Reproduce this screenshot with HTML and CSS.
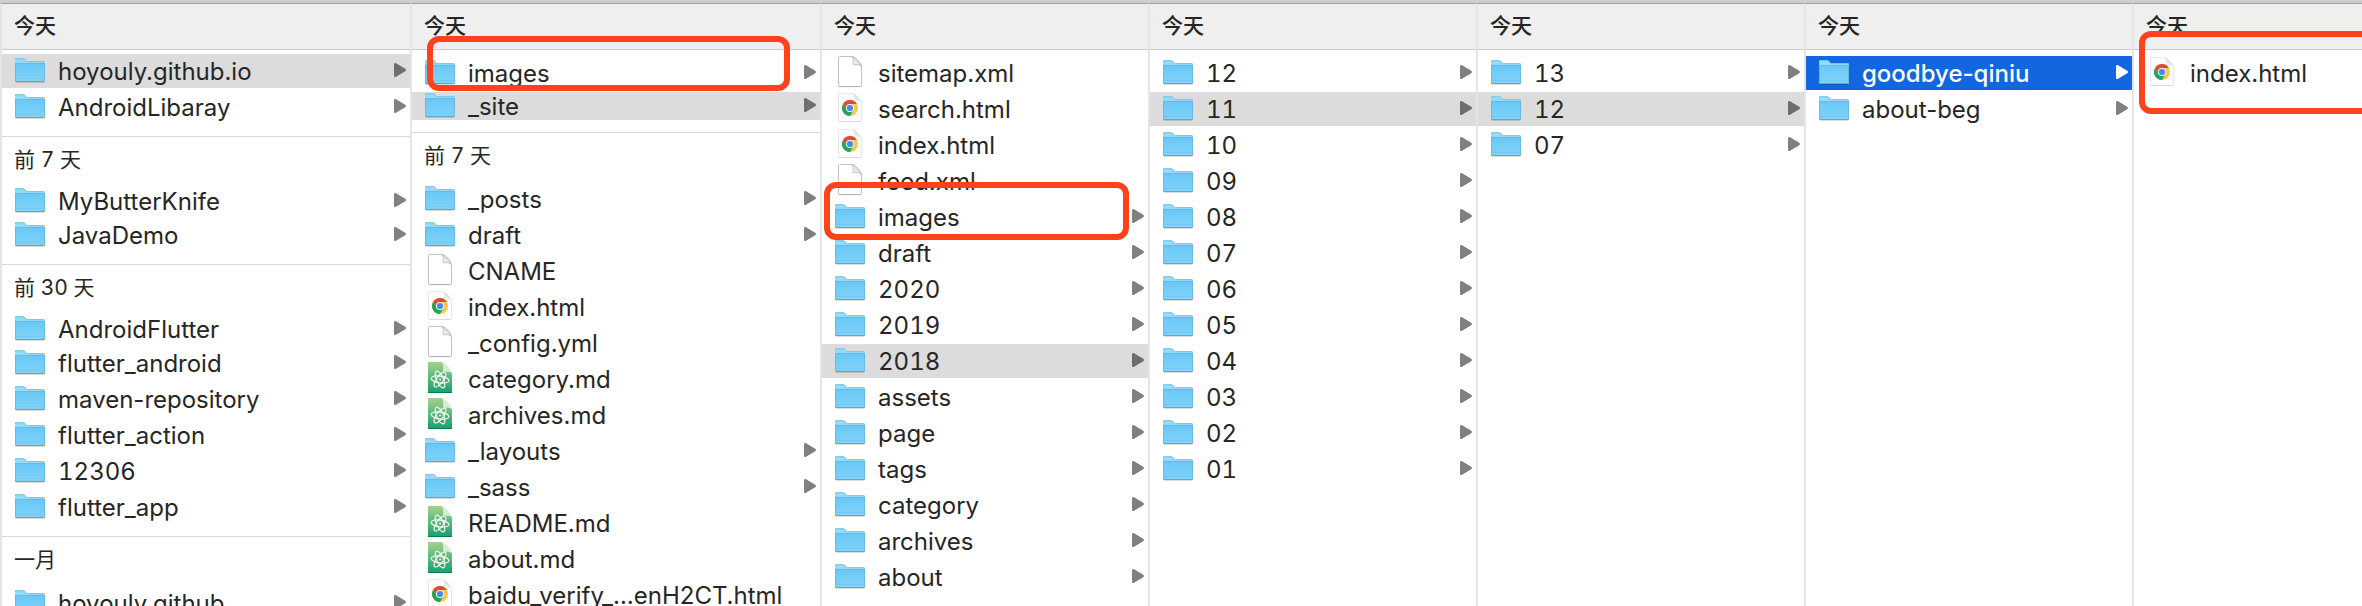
FILE: index.html
```html
<!DOCTYPE html>
<html lang="zh-CN">
<head>
<meta charset="utf-8">
<title>hoyouly.github.io</title>
<link rel="stylesheet" href="styles.css">
</head>
<body>
<svg class="defs" aria-hidden="true">
  <defs>
    <linearGradient id="g-folder" x1="0" y1="0" x2="0" y2="1"><stop offset="0" stop-color="#6ac8f5"/><stop offset="1" stop-color="#7fd3fa"/></linearGradient>
    <linearGradient id="g-atom" x1="0" y1="0" x2="0" y2="1"><stop offset="0" stop-color="#a3d28c"/><stop offset="1" stop-color="#16a06c"/></linearGradient>
    <linearGradient id="g-fold" x1="0" y1="1" x2="1" y2="0"><stop offset="0" stop-color="#ffffff"/><stop offset="1" stop-color="#c8c8c8"/></linearGradient>
    <symbol id="folder" viewBox="0 0 30 34">
      <path d="M1 28.5h28" stroke="#000" stroke-opacity=".14"/>
      <path d="M0 27V5.2Q0 4.2 1 4.2H8.4Q9.4 4.2 10 5L11.2 6.6Q11.7 7.2 12.6 7.2H29Q30 7.2 30 8.2V27Z" fill="#93dafb"/>
      <path d="M.5 6V5.2Q.5 4.7 1 4.7H8.4Q9.2 4.7 9.6 5.3L10.8 6.9Q11.3 7.6 12.4 7.6H29" fill="none" stroke="#78c4e8"/>
      <path d="M0 9.5H30V27Q30 28 29 28H1Q0 28 0 27Z" fill="url(#g-folder)"/>
      <path d="M0 9.5H30M.4 9.5V27M29.6 9.5V27" stroke="#5fb5dd" stroke-width=".8"/>
      <path d="M.5 27.5H29.5" stroke="#57abd2"/><path d="M1 24.5H29" stroke="#73c6ee" stroke-width=".7"/>
    </symbol>
    <symbol id="doc" viewBox="0 0 30 34">
      <path d="M3.5 1.5Q3.5.5 4.5.5H17Q19.500.8 21 2.500L25 7Q26.500 9 26.500 11V29.500Q26.500 30.500 25.500 30.500H4.500Q3.500 30.500 3.500 29.500Z" fill="#fff" stroke="#c2c2c2"/>
      <path d="M4 30.600H26" stroke="#a9a9a9" stroke-width=".8"/>
      <path d="M17.500.8Q18.400 3 18.200 8.800Q24.500 8 26.300 10.500Q24 4 17.500.8Z" fill="url(#g-fold)" stroke="#b8b8b8" stroke-width=".8"/>
    </symbol>
    <symbol id="chrome" viewBox="0 0 30 34">
      <path d="M4 1.500H18Q20 2 22 4.500L25 8Q26.500 10 26.500 12V29.500H3.500V2Q3.500 1.500 4 1.500Z" fill="#fdfdfd" stroke="#e2e2e2" stroke-width=".8"/>
      <path d="M4 29.500H26" stroke="#d2d2d2" stroke-width=".6"/>
      <path d="M18 1.800Q19.500 4 19 8.500Q24.500 8 26 10.500Q24 4 18 1.800Z" fill="url(#g-fold)"/>
      <circle cx="15" cy="16" r="8" fill="#f9c94a"/>
      <path d="M8.070 12A8 8 0 0 1 21.930 12H15A4 4 0 0 0 11.500 18Z" fill="#dc4b3e"/>
      <path d="M8.070 12L11.540 18A4 4 0 0 0 18.460 18L15 24A8 8 0 0 1 8.070 12Z" fill="#1fa463"/>
      <circle cx="15" cy="16" r="4" fill="#f4f4f4"/><circle cx="15" cy="16" r="3.100" fill="#4a88ee"/>
    </symbol>
    <symbol id="atom" viewBox="0 0 30 34">
      <path d="M3 0H17L27 11V31H3Z" fill="url(#g-atom)"/>
      <path d="M3 30.500H27" stroke="#0b7d50"/>
      <path d="M17 0Q18.600 3 18 9.500Q25 9 27 11.500Q25 4 17 0Z" fill="#d9ebd0"/>
      <g fill="none" stroke="#fff" stroke-width="1.100">
        <ellipse cx="15" cy="17.500" rx="9" ry="3.400" transform="rotate(8 15 17.500)"/>
        <ellipse cx="15" cy="17.500" rx="9" ry="3.400" transform="rotate(66 15 17.500)"/>
        <ellipse cx="15" cy="17.500" rx="9" ry="3.400" transform="rotate(-54 15 17.500)"/>
      </g>
      <circle cx="15" cy="17.500" r="1" fill="#fff"/>
    </symbol>
  </defs>
</svg>
<main class="browser">
  <section class="column">
    <h2 class="head">今天</h2>
    <ul class="list first high">
      <li><button class="item dir on"><svg><use href="#folder"/></svg><span>hoyouly.github.io</span></button></li>
      <li><button class="item dir"><svg><use href="#folder"/></svg><span>AndroidLibaray</span></button></li>
    </ul>
    <h3 class="group">前 7 天</h3>
    <ul class="list tight">
      <li><button class="item dir"><svg><use href="#folder"/></svg><span>MyButterKnife</span></button></li>
      <li><button class="item dir"><svg><use href="#folder"/></svg><span>JavaDemo</span></button></li>
    </ul>
    <h3 class="group">前 30 天</h3>
    <ul class="list tight">
      <li><button class="item dir"><svg><use href="#folder"/></svg><span>AndroidFlutter</span></button></li>
      <li><button class="item dir"><svg><use href="#folder"/></svg><span>flutter_android</span></button></li>
      <li><button class="item dir"><svg><use href="#folder"/></svg><span>maven-repository</span></button></li>
      <li><button class="item dir"><svg><use href="#folder"/></svg><span>flutter_action</span></button></li>
      <li><button class="item dir num"><svg><use href="#folder"/></svg><span>12306</span></button></li>
      <li><button class="item dir"><svg><use href="#folder"/></svg><span>flutter_app</span></button></li>
    </ul>
    <h3 class="group">一月</h3>
    <ul class="list">
      <li><button class="item dir"><svg><use href="#folder"/></svg><span>hoyouly.github</span></button></li>
    </ul>
  </section>
  <section class="column">
    <h2 class="head">今天</h2>
    <ul class="list first">
      <li><button class="item dir"><svg><use href="#folder"/></svg><span>images</span></button></li>
      <li><button class="item dir on short"><svg><use href="#folder"/></svg><span>_site</span></button></li>
    </ul>
    <h3 class="group">前 7 天</h3>
    <ul class="list">
      <li><button class="item dir"><svg><use href="#folder"/></svg><span>_posts</span></button></li>
      <li><button class="item dir"><svg><use href="#folder"/></svg><span>draft</span></button></li>
      <li><button class="item"><svg><use href="#doc"/></svg><span>CNAME</span></button></li>
      <li><button class="item"><svg><use href="#chrome"/></svg><span>index.html</span></button></li>
      <li><button class="item"><svg><use href="#doc"/></svg><span>_config.yml</span></button></li>
      <li><button class="item"><svg><use href="#atom"/></svg><span>category.md</span></button></li>
      <li><button class="item"><svg><use href="#atom"/></svg><span>archives.md</span></button></li>
      <li><button class="item dir"><svg><use href="#folder"/></svg><span>_layouts</span></button></li>
      <li><button class="item dir"><svg><use href="#folder"/></svg><span>_sass</span></button></li>
      <li><button class="item"><svg><use href="#atom"/></svg><span>README.md</span></button></li>
      <li><button class="item"><svg><use href="#atom"/></svg><span>about.md</span></button></li>
      <li><button class="item"><svg><use href="#chrome"/></svg><span>baidu_verify_…enH2CT.html</span></button></li>
    </ul>
    <div class="mark mark-images"></div>
  </section>
  <section class="column">
    <h2 class="head">今天</h2>
    <ul class="list first">
      <li><button class="item"><svg><use href="#doc"/></svg><span>sitemap.xml</span></button></li>
      <li><button class="item"><svg><use href="#chrome"/></svg><span>search.html</span></button></li>
      <li><button class="item"><svg><use href="#chrome"/></svg><span>index.html</span></button></li>
      <li><button class="item"><svg><use href="#doc"/></svg><span>feed.xml</span></button></li>
      <li><button class="item dir"><svg><use href="#folder"/></svg><span>images</span></button></li>
      <li><button class="item dir"><svg><use href="#folder"/></svg><span>draft</span></button></li>
      <li><button class="item dir num"><svg><use href="#folder"/></svg><span>2020</span></button></li>
      <li><button class="item dir num"><svg><use href="#folder"/></svg><span>2019</span></button></li>
      <li><button class="item dir num on"><svg><use href="#folder"/></svg><span>2018</span></button></li>
      <li><button class="item dir"><svg><use href="#folder"/></svg><span>assets</span></button></li>
      <li><button class="item dir"><svg><use href="#folder"/></svg><span>page</span></button></li>
      <li><button class="item dir"><svg><use href="#folder"/></svg><span>tags</span></button></li>
      <li><button class="item dir"><svg><use href="#folder"/></svg><span>category</span></button></li>
      <li><button class="item dir"><svg><use href="#folder"/></svg><span>archives</span></button></li>
      <li><button class="item dir"><svg><use href="#folder"/></svg><span>about</span></button></li>
    </ul>
    <div class="mark mark-site-images"></div>
  </section>
  <section class="column">
    <h2 class="head">今天</h2>
    <ul class="list first num">
      <li><button class="item dir"><svg><use href="#folder"/></svg><span>12</span></button></li>
      <li><button class="item dir on"><svg><use href="#folder"/></svg><span>11</span></button></li>
      <li><button class="item dir"><svg><use href="#folder"/></svg><span>10</span></button></li>
      <li><button class="item dir"><svg><use href="#folder"/></svg><span>09</span></button></li>
      <li><button class="item dir"><svg><use href="#folder"/></svg><span>08</span></button></li>
      <li><button class="item dir"><svg><use href="#folder"/></svg><span>07</span></button></li>
      <li><button class="item dir"><svg><use href="#folder"/></svg><span>06</span></button></li>
      <li><button class="item dir"><svg><use href="#folder"/></svg><span>05</span></button></li>
      <li><button class="item dir"><svg><use href="#folder"/></svg><span>04</span></button></li>
      <li><button class="item dir"><svg><use href="#folder"/></svg><span>03</span></button></li>
      <li><button class="item dir"><svg><use href="#folder"/></svg><span>02</span></button></li>
      <li><button class="item dir"><svg><use href="#folder"/></svg><span>01</span></button></li>
    </ul>
  </section>
  <section class="column">
    <h2 class="head">今天</h2>
    <ul class="list first num">
      <li><button class="item dir"><svg><use href="#folder"/></svg><span>13</span></button></li>
      <li><button class="item dir on"><svg><use href="#folder"/></svg><span>12</span></button></li>
      <li><button class="item dir"><svg><use href="#folder"/></svg><span>07</span></button></li>
    </ul>
  </section>
  <section class="column">
    <h2 class="head">今天</h2>
    <ul class="list first">
      <li><button class="item dir active"><svg><use href="#folder"/></svg><span>goodbye-qiniu</span></button></li>
      <li><button class="item dir"><svg><use href="#folder"/></svg><span>about-beg</span></button></li>
    </ul>
  </section>
  <section class="column">
    <h2 class="head">今天</h2>
    <ul class="list first">
      <li><button class="item"><svg><use href="#chrome"/></svg><span>index.html</span></button></li>
    </ul>
    <div class="mark mark-result"></div>
  </section>
</main>
</body>
</html>
```

FILE: styles.css
```css
* {
  box-sizing: border-box;
}

body {
  margin: 0;
  height: 100vh;
  overflow: hidden;
  background: #fff;
  color: #262626;
  font-family: Inter, "Noto Sans CJK SC", sans-serif;
  font-size: 24px;
}

.defs {
  position: absolute;
  width: 0;
  height: 0;
}

.browser {
  display: grid;
  grid-template-columns: 410fr 410fr 328fr 328fr 328fr 328fr 230fr;
  height: 100%;
  border-top: 3px solid #cecece;
}

.column {
  position: relative;
  min-width: 0;
  overflow: hidden;
  border-top: 1px solid #a0a0a0;
  border-left: 2px solid #e5e5e5;
}

.head,
.group {
  margin: 0;
  padding: 0 12px;
  font-size: 21px;
  line-height: 44px;
}

.head {
  height: 46px;
  background: #efefef;
  border-bottom: 1px solid #c9c9c9;
  font-weight: 500;
}

.group {
  height: 50px;
  margin-top: 12px;
  border-top: 1px solid #d8d8d8;
  font-weight: 400;
  line-height: 46px;
}

.group,
.num {
  font-variant-numeric: tabular-nums;
}

.list {
  display: flex;
  flex-direction: column;
  gap: 2px;
  margin: 0;
  padding: 0;
  list-style: none;
}

.list.first {
  padding-top: 6px;
}

.list.high {
  padding-top: 4px;
}

.group:has(+ .tight) {
  height: 48px;
}

.tight li:first-child {
  margin-bottom: -2px;
}

.item {
  display: flex;
  align-items: center;
  gap: 13px;
  width: 100%;
  height: 34px;
  padding: 0 4px 0 13px;
  border: 0;
  background: transparent;
  color: inherit;
  font-family: inherit;
  font-size: inherit;
  text-align: left;
  white-space: nowrap;
}

.num .item {
  font-variant-numeric: inherit;
}

.item svg {
  flex: none;
  width: 30px;
  height: 34px;
}

.item span {
  flex: 1;
  padding-top: 2px;
  line-height: 32px;
}

.dir::after {
  content: "";
  width: 12px;
  height: 14px;
  margin-bottom: 2px;
  background: #808080;
  clip-path: polygon(0 6%, 6% 0, 14% 0, 97% 43%, 100% 50%, 97% 57%, 14% 100%, 6% 100%, 0 94%);
}

.on {
  background: #dcdcdc;
}

.on::after {
  background: #6e6e6e;
}

.short {
  height: 28px;
}

.active {
  background: #1267e0;
  color: #fff;
  font-weight: 500;
}

.active::after {
  background: #fff;
}

.mark {
  position: absolute;
  border: 6px solid #ff421c;
  border-radius: 12px;
}

.mark-images {
  top: 32px;
  left: 15px;
  right: 30px;
  height: 55px;
}

.mark-site-images {
  top: 178px;
  left: 2px;
  right: 19px;
  height: 58px;
}

.mark-result {
  top: 27px;
  left: 5px;
  right: -12px;
  height: 83px;
}
```
